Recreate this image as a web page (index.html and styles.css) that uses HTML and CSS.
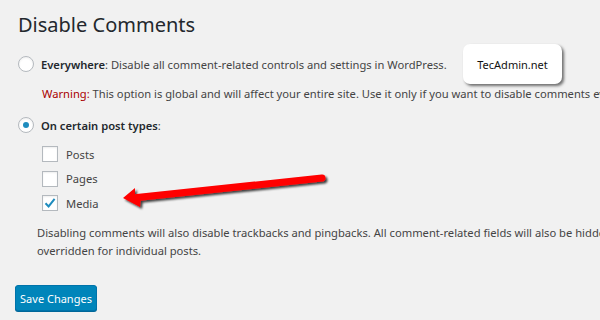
FILE: index.html
```html
<!DOCTYPE html>
<html>
<head>
<meta charset="utf-8">
<link rel="stylesheet" href="styles.css">
</head>
<body>
<div class="wrap">
  <h1 class="title">Disable Comments</h1>
  <div class="opt">
    <span class="radio"></span>
    <span class="label"><b class="strong">Everywhere</b>: Disable all comment-related controls and settings in WordPress.</span>
  </div>
  <p class="warn"><span class="warn-key">Warning:</span> This option is global and will affect your entire site. Use it only if you want to disable comments everywhere.</p>
  <div class="opt opt2">
    <span class="radio checked"></span>
    <span class="label"><b class="strong">On certain post types</b>:</span>
  </div>
  <ul class="types">
    <li class="type"><span class="check"></span>Posts</li>
    <li class="type"><span class="check"></span>Pages</li>
    <li class="type"><span class="check on"><svg viewBox="0 0 16 16" width="16" height="16"><path d="M3.5 8.2 L6.6 11.4 L12.6 3.8" fill="none" stroke="#1e8cbe" stroke-width="2"/></svg></span>Media</li>
  </ul>
  <p class="desc">Disabling comments will also disable trackbacks and pingbacks. All comment-related fields will also be hidden from the edit/quick-edit screens of the affected posts. These settings cannot be<br>overridden for individual posts.</p>
  <button class="save">Save Changes</button>
</div>
<div class="badge">TecAdmin.net</div>
<svg class="arrow" width="220" height="50" viewBox="0 0 220 50">
  <defs>
    <filter id="sh" x="-10%" y="-50%" width="130%" height="200%">
      <feDropShadow dx="2" dy="2" stdDeviation="1.3" flood-color="#000" flood-opacity="0.75"/>
    </filter>
  </defs>
  <g filter="url(#sh)">
    <line x1="207" y1="10" x2="22" y2="29.5" stroke="#ff0000" stroke-width="7" stroke-linecap="round"/>
    <path d="M8 30 L20 20 L20 28 L26 29 L25 39 Z" fill="#ff0000"/>
  </g>
</svg>
</body>
</html>
```
FILE: styles.css
```css
html, body {
  margin: 0;
  padding: 0;
  background: #f1f1f1;
  width: 600px;
  height: 320px;
  overflow: hidden;
  position: relative;
}
.wrap {
  padding: 0 0 0 18px;
  font-family: "Noto Sans", "Open Sans", sans-serif;
  font-size: 11.2px;
  color: #444;
  white-space: nowrap;
}
.title {
  margin: 0;
  padding-top: 10px;
  font-family: "Noto Sans", sans-serif;
  font-weight: 400;
  font-size: 20px;
  line-height: 30px;
  color: #23282d;
}
.opt {
  display: flex;
  align-items: center;
  gap: 7px;
  margin-top: 16px;
  height: 16px;
}
.opt2 { margin-top: 14px; }
.strong { font-weight: 600; color: #23282d; }
.radio {
  width: 14px;
  height: 14px;
  border: 1px solid #b4b9be;
  border-radius: 50%;
  background: #fff;
  box-shadow: inset 0 1px 2px rgba(0,0,0,.07);
  display: flex;
  align-items: center;
  justify-content: center;
  flex: none;
}
.radio.checked::after {
  content: "";
  width: 6px;
  height: 6px;
  border-radius: 50%;
  background: #1e8cbe;
}
.warn {
  margin: 13px 0 0 24px;
  line-height: 18px;
}
.warn-key { color: #a00; }
.types {
  list-style: none;
  margin: 13px 0 0 24px;
  padding: 0;
  display: flex;
  flex-direction: column;
  gap: 8.5px;
}
.type {
  display: flex;
  align-items: center;
  gap: 8px;
  height: 16px;
}
.check {
  width: 14px;
  height: 14px;
  border: 1px solid #b4b9be;
  background: #fff;
  box-shadow: inset 0 1px 2px rgba(0,0,0,.07);
  flex: none;
  position: relative;
}
.check svg { position: absolute; left: -1px; top: -1px; }
.desc {
  margin: 13px 0 0 19px;
  line-height: 18px;
}
.save {
  margin: 25px 0 0 -3px;
  width: 82px;
  height: 26px;
  padding: 0;
  background: #0085ba;
  border: 1px solid #0073aa;
  border-radius: 3px;
  color: #fff;
  font-family: "Noto Sans", sans-serif;
  font-size: 11px;
  box-shadow: 0 1px 0 #006799;
}
.badge {
  position: absolute;
  left: 463px;
  top: 44px;
  width: 99px;
  height: 40px;
  background: #fff;
  border-radius: 7px;
  box-shadow: 2px 2px 3px rgba(0,0,0,.55);
  font-family: "Noto Sans", sans-serif;
  font-size: 11px;
  color: #111;
  display: flex;
  align-items: center;
  justify-content: center;
}
.arrow {
  position: absolute;
  left: 115px;
  top: 168px;
}
```
